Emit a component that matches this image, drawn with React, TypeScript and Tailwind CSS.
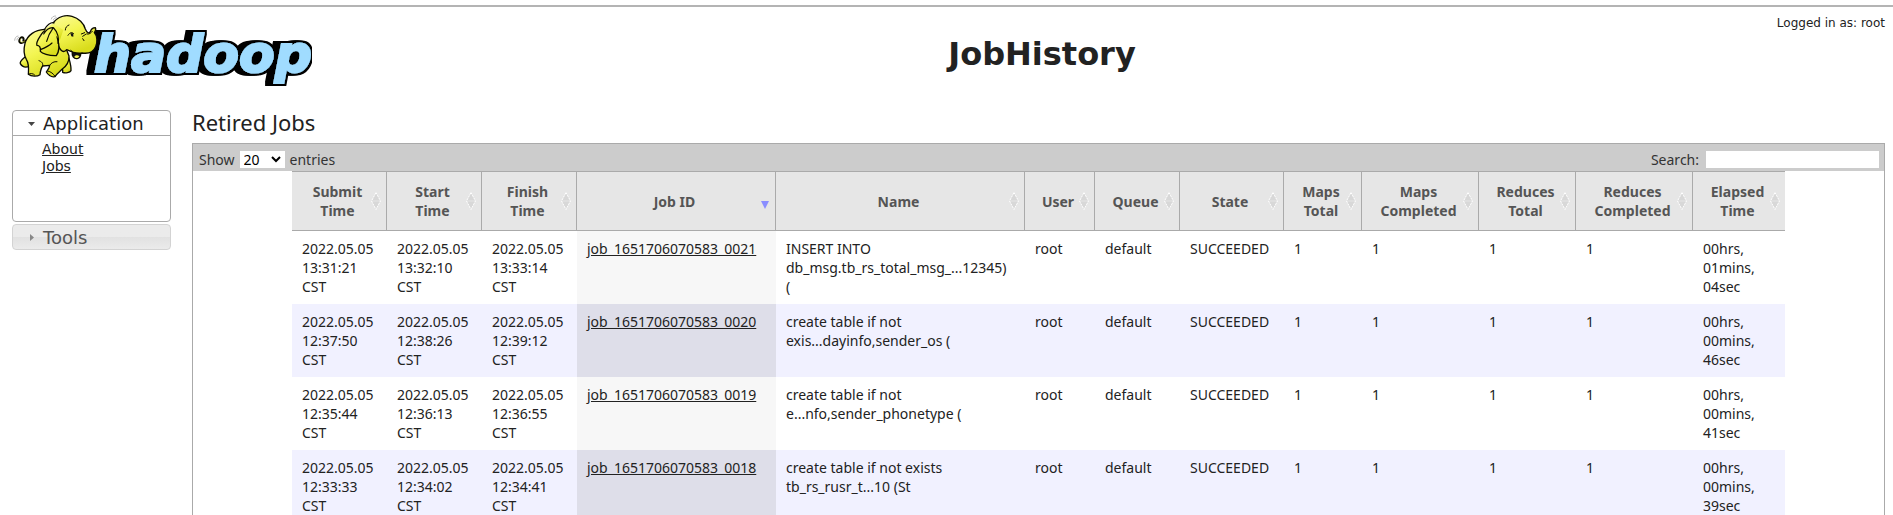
import type { ReactNode } from "react";

type Column = { label: ReactNode; width: string; sorted?: boolean };

const columns: Column[] = [
  { label: "Submit Time", width: "w-[95px]" },
  { label: "Start Time", width: "w-[95px]" },
  { label: "Finish Time", width: "w-[95px]" },
  { label: "Job ID", width: "w-[199px]", sorted: true },
  { label: "Name", width: "w-[249px]" },
  { label: "User", width: "w-[70px]" },
  { label: "Queue", width: "w-[85px]" },
  { label: "State", width: "w-[104px]" },
  { label: "Maps Total", width: "w-[78px]" },
  { label: "Maps Completed", width: "w-[117px]" },
  { label: "Reduces Total", width: "w-[97px]" },
  { label: "Reduces Completed", width: "w-[117px]" },
  { label: "Elapsed Time", width: "w-[92px]" },
];

type Job = {
  submit: string;
  start: string;
  finish: string;
  id: string;
  name: string;
  elapsed: string;
};

const jobs: Job[] = [
  {
    submit: "2022.05.05 13:31:21 CST",
    start: "2022.05.05 13:32:10 CST",
    finish: "2022.05.05 13:33:14 CST",
    id: "job_1651706070583_0021",
    name: "INSERT INTO\ndb_msg.tb_rs_total_msg_...12345)\n(",
    elapsed: "00hrs, 01mins, 04sec",
  },
  {
    submit: "2022.05.05 12:37:50 CST",
    start: "2022.05.05 12:38:26 CST",
    finish: "2022.05.05 12:39:12 CST",
    id: "job_1651706070583_0020",
    name: "create table if not\nexis...dayinfo,sender_os (",
    elapsed: "00hrs, 00mins, 46sec",
  },
  {
    submit: "2022.05.05 12:35:44 CST",
    start: "2022.05.05 12:36:13 CST",
    finish: "2022.05.05 12:36:55 CST",
    id: "job_1651706070583_0019",
    name: "create table if not\ne...nfo,sender_phonetype (",
    elapsed: "00hrs, 00mins, 41sec",
  },
  {
    submit: "2022.05.05 12:33:33 CST",
    start: "2022.05.05 12:34:02 CST",
    finish: "2022.05.05 12:34:41 CST",
    id: "job_1651706070583_0018",
    name: "create table if not exists\ntb_rs_rusr_t...10 (St",
    elapsed: "00hrs, 00mins, 39sec",
  },
];

function Logo() {
  return (
    <svg width="302" height="80" viewBox="0 0 302 80" role="img" aria-label="hadoop">
      <defs>
        <linearGradient id="hide" x1="0" y1="0" x2="0.5" y2="1">
          <stop offset="0" stopColor="#fbfb9a" />
          <stop offset="0.5" stopColor="#f3f552" />
          <stop offset="1" stopColor="#d9dc1c" />
        </linearGradient>
        <filter id="extrude" x="-10%" y="-10%" width="120%" height="120%">
          <feMorphology in="SourceAlpha" operator="dilate" radius="1.5" result="outline" />
          <feOffset in="outline" dx="-2" result="s1" />
          <feOffset in="outline" dx="-4" result="s2" />
          <feOffset in="outline" dx="-6" result="s3" />
          <feMerge>
            <feMergeNode in="s3" />
            <feMergeNode in="s2" />
            <feMergeNode in="s1" />
            <feMergeNode in="outline" />
            <feMergeNode in="SourceGraphic" />
          </feMerge>
        </filter>
      </defs>
      <text
        x="84"
        y="62"
        fontFamily="'DejaVu Sans', sans-serif"
        fontWeight="700"
        fontStyle="italic"
        fontSize="52"
        fill="#a0dcff"
        stroke="#a0dcff"
        strokeWidth="2"
        filter="url(#extrude)"
      >
        hadoop
      </text>
      <g
        transform="scale(0.3333)"
        fill="url(#hide)"
        stroke="#0c0c00"
        strokeWidth="4"
        strokeLinecap="round"
        strokeLinejoin="round"
      >
        <path fill="none" strokeWidth="6" d="M47 92C34 106 24 97 30 86C34 78 44 83 40 91" />
        <path fill="none" stroke="#e6e84a" strokeWidth="2" d="M44 93C35 101 28 95 32 87" />
        <path d="M46 140C36 148 29 156 31 161C36 170 46 173 56 170L66 148Z" />
        <path d="M150 165C160 172 158 184 158 187C166 190 180 188 183 182C184 168 180 156 176 142Z" />
        <path d="M103 58C76 60 52 74 45 100C40 120 42 136 49 148C58 162 56 176 55 193C64 200 82 200 90 194C91 184 92 176 98 168L119 166C119 174 112 180 109 186C114 194 124 202 135 200C139 192 148 186 156 178C170 168 178 158 177 138L150 70Z" />
        <path d="M188 124C184 138 192 147 201 146C209 144 213 136 212 127Z" fill="#111" />
        <path d="M193 140C197 135 204 135 208 139C204 146 197 146 193 140Z" fill="#f3f552" stroke="none" />
        <path d="M130 38C144 20 166 14 186 19C206 24 222 40 226 57C231 70 237 71 241 65C243 59 249 53 256 53C259 59 256 64 253 68C262 78 263 96 257 110C250 126 234 132 216 129C202 132 184 126 170 119C158 134 146 116 140 90Z" />
        <path d="M132 52C112 54 100 62 92 76C84 88 78 100 81 106C88 106 93 112 91 124C96 130 116 138 139 137C148 124 148 104 143 88C140 76 138 64 132 52Z" />
        <path stroke="none" d="M130 40C118 46 108 54 104 62L130 70L150 90L160 60Z" />
        <path fill="none" strokeWidth="3.5" d="M103 59C110 45 122 36 132 38M101 72C109 58 120 52 130 53C119 68 113 82 110 94M131 54C143 66 148 86 144 100M91 119C104 114 117 108 126 99" />
        <path fill="none" strokeWidth="3" d="M166 60C166 52 171 47 177 45M174 76C180 66 187 66 191 71M214 72L224 68M218 79L227 73M218 86L222 92M230 72C238 74 243 69 247 64M183 121C187 123 188 127 187 131" />
        <path d="M181 70L190 70L190 80L184 79Z" fill="#111" stroke="none" />
        <path fill="none" strokeWidth="3" d="M98 168C100 159 95 155 87 152M119 166C124 158 132 154 141 155M55 193C61 189 70 190 74 195M113 183C123 185 130 191 135 199" />
        <path stroke="#999" strokeWidth="2" fill="none" d="M124 27C125 21 130 18 137 18M130 30C131 26 134 24 139 23M14 91C14 84 18 79 24 78M21 90C21 86 23 83 26 82" />
      </g>
    </svg>
  );
}

function SortIcon({ sorted }: { sorted?: boolean }) {
  if (sorted) {
    return (
      <svg width="10" height="18" viewBox="0 0 10 18" aria-hidden="true">
        <path d="M1 9H9L5 17Z" fill="#8a8eff" />
      </svg>
    );
  }
  return (
    <svg width="10" height="18" viewBox="0 0 10 18" aria-hidden="true">
      <path d="M5 1L9 8.500H1ZM5 17L9 9.500H1Z" fill="#d8d8d8" />
      <path d="M5 0.500L9.500 9L5 17.500L0.500 9Z" fill="none" stroke="#fff" strokeWidth="1" strokeDasharray="2 1" />
    </svg>
  );
}

function Sidebar() {
  return (
    <nav className="w-[159px] shrink-0 font-['DejaVu_Sans',sans-serif]">
      <section className="rounded border border-[#aaa]">
        <h3 className="border-b border-[#aaa]">
          <button type="button" aria-expanded="true" className="flex h-6 w-full items-center pt-px pl-[14px] text-lg text-[#212121]">
            <svg width="9" height="6" viewBox="0 0 9 6" className="mr-[7px]" aria-hidden="true">
              <path d="M1 1H8L4.500 5Z" fill="#454545" />
            </svg>
            Application
          </button>
        </h3>
        <ul className="h-[85px] pt-[5px] pl-[29px] text-sm leading-[17px] text-[#212121]">
          <li><a href="#about" className="underline">About</a></li>
          <li><a href="#jobs" className="underline">Jobs</a></li>
        </ul>
      </section>
      <section className="mt-0.5 rounded border border-[#d3d3d3] bg-linear-to-b from-[#ebebeb] from-50% via-[#e1e1e1] via-50% to-[#ebebeb]">
        <h3>
          <button type="button" aria-expanded="false" className="flex h-6 w-full items-center pt-px pl-[14px] text-lg text-[#555]">
            <svg width="9" height="9" viewBox="0 0 9 9" className="mr-[7px]" aria-hidden="true">
              <path d="M3 1L7 4.500L3 8Z" fill="#888" />
            </svg>
            Tools
          </button>
        </h3>
      </section>
    </nav>
  );
}

function Toolbar() {
  return (
    <div className="flex h-[27px] items-center justify-between bg-[#ccc] pt-1 pr-[5px] pl-[6px] text-[#333]">
      <label className="flex items-center gap-[5px]">
        Show
        <span className="relative flex">
          <select defaultValue="20" className="h-[17px] w-[45px] appearance-none bg-white pl-1 text-sm leading-[17px] text-black">
            <option>20</option>
            <option>40</option>
            <option>60</option>
            <option>80</option>
            <option>100</option>
          </select>
          <svg width="10" height="7" viewBox="0 0 10 7" className="pointer-events-none absolute top-[5px] right-1" aria-hidden="true">
            <path d="M1 1L5 5L9 1" fill="none" stroke="#000" strokeWidth="2" />
          </svg>
        </span>
        entries
      </label>
      <label className="flex items-center gap-[7px]">
        Search:
        <input type="text" className="h-[17px] w-[173px] bg-white px-1 text-sm" />
      </label>
    </div>
  );
}

function JobsTable() {
  return (
    <table className="mx-auto w-[1493px] table-fixed border-separate border-spacing-0 leading-[19px] text-[#222]">
      <thead>
        <tr>
          {columns.map((column, index) => (
            <th
              key={index}
              className={`${column.width} h-[60px] border-y border-r border-[#aaa] bg-[#e6e6e6] p-0 text-[#555] last:border-r-0`}
            >
              <div className="flex items-center pr-[5px] pl-3">
                <span className="flex-1">{column.label}</span>
                <SortIcon sorted={column.sorted} />
              </div>
            </th>
          ))}
        </tr>
      </thead>
      <tbody>
        {jobs.map((job) => (
          <tr key={job.id} className="group align-top even:bg-[#f1f1ff] [&>td]:py-2 [&>td]:pl-[10px]">
            <td className="pr-2">{job.submit}</td>
            <td className="pr-2">{job.start}</td>
            <td className="pr-2">{job.finish}</td>
            <td className="bg-[#f7f7f7] group-even:bg-[#dedee9]">
              <a href={`#${job.id}`} className="underline">{job.id}</a>
            </td>
            <td className="whitespace-pre">{job.name}</td>
            <td>root</td>
            <td>default</td>
            <td>SUCCEEDED</td>
            <td>1</td>
            <td>1</td>
            <td>1</td>
            <td>1</td>
            <td className="pr-5">{job.elapsed}</td>
          </tr>
        ))}
      </tbody>
    </table>
  );
}

export default function App() {
  return (
    <div className="bg-white pt-[5px] font-['Noto_Sans',sans-serif] text-sm text-[#222]">
      <header className="flex border-t-2 border-[#b4b4b4] font-['DejaVu_Sans',sans-serif]">
        <div className="w-[311px] shrink-0 pt-[3px] pl-[10px]">
          <Logo />
        </div>
        <h1 className="flex-1 pt-7 text-center text-[32px] leading-[38px] font-bold">JobHistory</h1>
        <div className="w-[120px] shrink-0 pt-2 pr-2 text-right text-xs whitespace-nowrap">Logged in as: root</div>
      </header>
      <div className="flex gap-[21px] pt-[14px] pr-2 pl-3">
        <div className="flex pt-[6px]">
          <Sidebar />
        </div>
        <main className="min-w-0 flex-1">
          <h2 className="h-[39px] pt-1 text-[22px] leading-7">Retired Jobs</h2>
          <div className="border border-[#aaa]">
            <Toolbar />
            <JobsTable />
          </div>
        </main>
      </div>
    </div>
  );
}
